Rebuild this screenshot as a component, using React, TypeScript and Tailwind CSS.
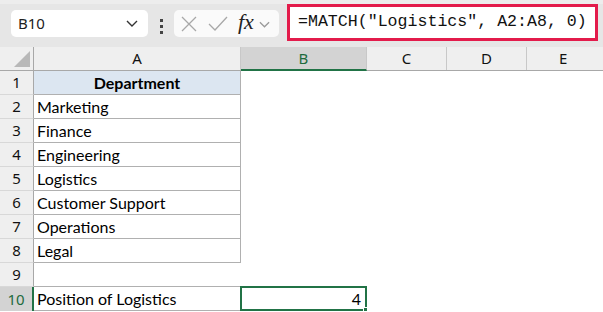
import React from 'react';

const ROWS = [
  { n: 1, a: 'Department' },
  { n: 2, a: 'Marketing' },
  { n: 3, a: 'Finance' },
  { n: 4, a: 'Engineering' },
  { n: 5, a: 'Logistics' },
  { n: 6, a: 'Customer Support' },
  { n: 7, a: 'Operations' },
  { n: 8, a: 'Legal' },
];

const uiFont = { fontFamily: '"Noto Sans", "Open Sans", sans-serif' };
const cellFont = { fontFamily: 'Lato, "Liberation Sans", sans-serif' };

function Chevron({ color = '#333', w = 12 }: { color?: string; w?: number }) {
  return (
    <svg width={w} height={7} viewBox="0 0 12 7" fill="none">
      <polyline points="1,1 6,6 11,1" stroke={color} strokeWidth="1.4" />
    </svg>
  );
}

function FormulaBar() {
  return (
    <div className="h-[47px] bg-[#e6e6e6] border-t-[4px] border-[#ededed] flex items-start" style={uiFont}>
      {/* name box */}
      <div className="ml-[11px] mt-[6px] w-[137px] h-[27px] bg-white rounded-[5px] flex items-center justify-between pl-[7px] pr-[10px]">
        <span className="text-[15px] text-[#222]">B10</span>
        <Chevron />
      </div>
      {/* grip dots */}
      <div className="ml-[12px] mt-[15px] flex flex-col gap-[3px]">
        <div className="w-[3px] h-[3px] bg-[#444]" />
        <div className="w-[3px] h-[3px] bg-[#444]" />
        <div className="w-[3px] h-[3px] bg-[#444]" />
      </div>
      {/* cancel / enter / fx */}
      <div className="ml-[11px] mt-[6px] w-[105px] h-[27px] bg-[#fafafa] rounded-[5px] flex items-center pl-[7px]">
        <svg width="16" height="16" viewBox="0 0 16 16" fill="none">
          <path d="M1 1 L15 15 M15 1 L1 15" stroke="#a8a8a8" strokeWidth="1.3" />
        </svg>
        <svg className="ml-[11px]" width="20" height="16" viewBox="0 0 20 16" fill="none">
          <path d="M1 8 L7 14 L19 1" stroke="#a8a8a8" strokeWidth="1.3" />
        </svg>
        <span
          className="ml-[10px] text-[22px] italic leading-none text-[#222] -mt-[3px]"
          style={{ fontFamily: '"Liberation Serif", "DejaVu Serif", serif' }}
        >
          fx
        </span>
        <span className="ml-[5px] mt-[2px]">
          <Chevron color="#9a9a9a" w={11} />
        </span>
      </div>
      {/* formula input */}
      <div className="ml-[8px] w-[311px] h-[37px] bg-white border-[3px] border-[#e31b4b] flex items-center pl-[8px]">
        <span
          className="text-[16.6px] text-[#111] whitespace-pre"
          style={{ fontFamily: '"Liberation Mono", monospace' }}
        >
          =MATCH("Logistics", A2:A8, 0)
        </span>
      </div>
    </div>
  );
}

function HeaderRow() {
  return (
    <div className="flex h-[24px] bg-[#efefef] border-b border-[#a8a8a8] text-[15px] text-[#111]" style={uiFont}>
      <div className="w-[34px] border-r border-[#a8a8a8] relative">
        <svg className="absolute right-[3px] bottom-[3px]" width="16" height="16" viewBox="0 0 16 16">
          <polygon points="16,0 16,16 0,16" fill="#b8b8b8" />
        </svg>
      </div>
      <div className="w-[207px] border-r border-[#c8c8c8] flex items-center justify-center">A</div>
      <div className="w-[126px] -mb-[1px] bg-[#d3d3d3] border-r border-[#c8c8c8] border-b-2 border-b-[#217346] flex items-center justify-center text-[#1e6b3e]">
        B
      </div>
      <div className="w-[80px] border-r border-[#c8c8c8] flex items-center justify-center">C</div>
      <div className="w-[80px] border-r border-[#c8c8c8] flex items-center justify-center">D</div>
      <div className="flex-1 flex items-center justify-start pl-[32px]">E</div>
    </div>
  );
}

function RowHead({ n, selected }: { n: number; selected?: boolean }) {
  return (
    <div
      className={
        selected
          ? 'w-[34px] shrink-0 bg-[#d3d3d3] border-r-2 border-[#217346] flex items-center justify-center text-[15px] text-[#1e6b3e]'
          : 'w-[34px] shrink-0 bg-[#efefef] border-r border-[#a8a8a8] border-b border-b-[#d8d8d8] flex items-center justify-center text-[15px] text-[#111]'
      }
      style={uiFont}
    >
      {n}
    </div>
  );
}

export default function App() {
  return (
    <div className="w-[603px] h-[312px] overflow-hidden bg-white">
      <FormulaBar />
      <HeaderRow />
      {ROWS.map((r) => (
        <div key={r.n} className="flex h-[24px]">
          <RowHead n={r.n} />
          <div
            className={
              r.n === 1
                ? 'w-[207px] bg-[#dce6f1] border-r border-b border-[#b0b0b0] flex items-center justify-center font-bold text-[16px] text-black'
                : 'w-[207px] border-r border-b border-[#b0b0b0] flex items-center pl-[3px] text-[16px] text-black'
            }
            style={cellFont}
          >
            {r.a}
          </div>
        </div>
      ))}
      <div className="flex h-[24px]">
        <RowHead n={9} />
        <div className="w-[207px] border-b border-[#b0b0b0]" />
      </div>
      <div className="flex h-[24px]">
        <RowHead n={10} selected />
        <div className="w-[206px] border-b border-[#b0b0b0] flex items-center pl-[3px] text-[16px] text-black" style={cellFont}>
          Position of Logistics
        </div>
        <div className="w-[127px] relative -mt-[1px] border-2 border-[#217346] flex items-center justify-end pr-[4px] text-[16px] text-black" style={cellFont}>
          4
          <div className="absolute -right-[3px] -bottom-[3px] w-[5px] h-[5px] bg-[#217346] border border-white" />
        </div>
      </div>
    </div>
  );
}
